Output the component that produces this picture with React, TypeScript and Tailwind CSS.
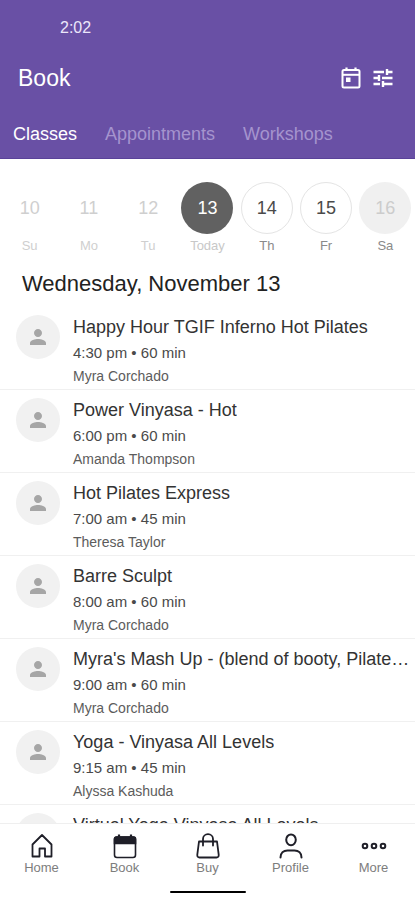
import React, { useState } from 'react';
import { MdPerson } from 'react-icons/md';

interface Day {
  date: number;
  label: string;
  state: 'past' | 'today' | 'open' | 'closed';
}

interface ClassItem {
  title: string;
  time?: string;
  teacher?: string;
}

const TABS = ['Classes', 'Appointments', 'Workshops'];

const DAYS: Day[] = [
  { date: 10, label: 'Su', state: 'past' },
  { date: 11, label: 'Mo', state: 'past' },
  { date: 12, label: 'Tu', state: 'past' },
  { date: 13, label: 'Today', state: 'today' },
  { date: 14, label: 'Th', state: 'open' },
  { date: 15, label: 'Fr', state: 'open' },
  { date: 16, label: 'Sa', state: 'closed' },
];

const CLASSES: ClassItem[] = [
  { title: 'Happy Hour TGIF Inferno Hot Pilates', time: '4:30 pm • 60 min', teacher: 'Myra Corchado' },
  { title: 'Power Vinyasa - Hot', time: '6:00 pm • 60 min', teacher: 'Amanda Thompson' },
  { title: 'Hot Pilates Express', time: '7:00 am • 45 min', teacher: 'Theresa Taylor' },
  { title: 'Barre Sculpt', time: '8:00 am • 60 min', teacher: 'Myra Corchado' },
  { title: "Myra's Mash Up - (blend of booty, Pilate…", time: '9:00 am • 60 min', teacher: 'Myra Corchado' },
  { title: 'Yoga - Vinyasa All Levels', time: '9:15 am • 45 min', teacher: 'Alyssa Kashuda' },
  { title: 'Virtual Yoga Vinyasa All Levels' },
];

const circleStyles = {
  past: 'text-[#cfcfcf]',
  today: 'bg-[#616161] text-white',
  open: 'border border-[#e4e4e4] text-[#4a4a4a]',
  closed: 'bg-[#f0f0f0] text-[#cccccc]',
};

const labelStyles = {
  past: 'text-[#cfcfcf]',
  today: 'text-[#c8c8c8]',
  open: 'text-[#8a8a8a]',
  closed: 'text-[#8a8a8a]',
};

const CalendarIcon = () => (
  <svg viewBox="0 0 24 24" className="w-6 h-6" fill="none" stroke="currentColor" strokeWidth="2">
    <rect x="3.5" y="4" width="17" height="17.5" rx="1.5" />
    <path d="M3.5 8.8h17" />
    <path d="M7.5 1.5v3M16.5 1.5v3" strokeWidth="2.2" />
    <rect x="7" y="11.5" width="4.5" height="4.5" fill="currentColor" stroke="none" />
  </svg>
);

const TuneIcon = () => (
  <svg viewBox="0 0 24 24" className="w-6 h-6" fill="none" stroke="currentColor" strokeWidth="2.4">
    <path d="M2.5 6H13M16 6h5.5M16 3v6" />
    <path d="M2.5 12H8M11 12h10.5M8 9v6" />
    <path d="M2.5 18H9M12 18h9.500M12 15v6" />
  </svg>
);

const HomeIcon = () => (
  <svg viewBox="0 0 26 26" className="w-[26px] h-[26px]" fill="none" stroke="currentColor" strokeWidth="1.8" strokeLinejoin="round">
    <path d="M3.5 11.5 13 2l9.5 9.5v12H16v-8h-5.5v8h-7z" />
  </svg>
);

const BookIcon = () => (
  <svg viewBox="0 0 26 26" className="w-[26px] h-[26px]" fill="none" stroke="currentColor" strokeWidth="1.6">
    <rect x="2.5" y="4" width="21" height="20.5" rx="2.5" />
    <path d="M2.5 10.5V6a2 2 0 0 1 2-2h17a2 2 0 0 1 2 2v4.5z" fill="currentColor" />
    <path d="M7 1.5V5M19 1.5V5" strokeWidth="2.2" />
  </svg>
);

const BuyIcon = () => (
  <svg viewBox="0 0 26 26" className="w-[26px] h-[26px]" fill="none" stroke="currentColor" strokeWidth="1.8" strokeLinejoin="round" strokeLinecap="round">
    <path d="M4 8.5h18l1.7 13.2q.2 2.8-2.2 2.8h-17q-2.4 0-2.2-2.8z" />
    <path d="M8 12.5V6a5 4.8 0 0 1 10 0v6.5" />
  </svg>
);

const ProfileIcon = () => (
  <svg viewBox="0 0 26 26" className="w-[26px] h-[26px]" fill="none" stroke="currentColor" strokeWidth="2" strokeLinecap="round">
    <ellipse cx="13" cy="6.8" rx="4.8" ry="5.4" />
    <path d="M2.5 24.500c0-4.500 3-7 7-7h7c4 0 7 2.500 7 7" />
  </svg>
);

const MoreIcon = () => (
  <svg viewBox="0 0 26 26" className="w-[26px] h-[26px]" fill="none" stroke="currentColor" strokeWidth="2">
    <circle cx="4" cy="13" r="2.3" />
    <circle cx="13" cy="13" r="2.3" />
    <circle cx="22" cy="13" r="2.3" />
  </svg>
);

const NAV = [
  { label: 'Home', Icon: HomeIcon },
  { label: 'Book', Icon: BookIcon },
  { label: 'Buy', Icon: BuyIcon },
  { label: 'Profile', Icon: ProfileIcon },
  { label: 'More', Icon: MoreIcon },
];

const App: React.FC = () => {
  const [tab, setTab] = useState('Classes');

  return (
    <div className="h-screen flex flex-col bg-white font-['Liberation_Sans',Arial,sans-serif]">
      <header className="shrink-0 bg-[#6950a5] text-white border-b border-[#5a4299]">
        <div className="h-14 px-15 flex items-center text-base text-[#ece6fa]">2:02</div>
        <div className="h-11 pl-[18px] pr-5 flex items-center justify-between">
          <h1 className="text-[23px] leading-8">Book</h1>
          <div className="flex items-center gap-2">
            <button type="button" aria-label="Calendar"><CalendarIcon /></button>
            <button type="button" aria-label="Filters"><TuneIcon /></button>
          </div>
        </div>
        <nav className="px-[13px] pt-[22px] pb-3 flex items-center gap-7">
          {TABS.map(name => (
            <button
              key={name}
              type="button"
              onClick={() => setTab(name)}
              className={`text-lg leading-6 ${tab === name ? 'text-white' : 'text-[#a594ce]'}`}
            >
              {name}
            </button>
          ))}
        </nav>
      </header>

      <main className="flex-1 min-h-0 overflow-hidden">
        <div className="grid grid-cols-7 pt-[23px]">
          {DAYS.map(day => (
            <button key={day.date} type="button" className="flex flex-col items-center gap-0.5">
              <span className={`w-[52px] h-[52px] rounded-full flex items-center justify-center text-lg ${circleStyles[day.state]}`}>
                {day.date}
              </span>
              <span className={`text-[13px] leading-5 ${labelStyles[day.state]}`}>{day.label}</span>
            </button>
          ))}
        </div>

        <h2 className="px-[22px] pt-3 pb-[7px] text-[22px] leading-8 text-[#222222]">Wednesday, November 13</h2>

        <ul>
          {CLASSES.map(item => (
            <li key={item.title} className="flex gap-[13px] pl-4 pr-1 pt-2 pb-1 border-b border-[#f0f0f0]">
              <div className="w-11 h-11 shrink-0 rounded-full bg-[#f1f1f1] text-[#a6a6a6] flex items-center justify-center">
                <MdPerson className="w-6 h-6" />
              </div>
              <div className="min-w-0">
                <h3 className="truncate text-lg leading-6 text-[#333333]">{item.title}</h3>
                {item.time && <p className="text-[15px] leading-7 text-[#4a4a4a]">{item.time}</p>}
                {item.teacher && <p className="text-sm leading-[18px] text-[#5c5c5c]">{item.teacher}</p>}
              </div>
            </li>
          ))}
        </ul>
      </main>

      <footer className="shrink-0 bg-white border-t border-[#efefef]">
        <nav className="grid grid-cols-5 pt-[9px]">
          {NAV.map(({ label, Icon }) => (
            <a key={label} href="#" className="flex flex-col items-center text-[#1f1f28]">
              <Icon />
              <span className="text-[13px] leading-[18px] text-[#7d7d7d]">{label}</span>
            </a>
          ))}
        </nav>
        <div className="mx-auto mt-[14px] mb-[7px] w-19 h-0.5 rounded-full bg-black"></div>
      </footer>
    </div>
  );
};

export default App;
